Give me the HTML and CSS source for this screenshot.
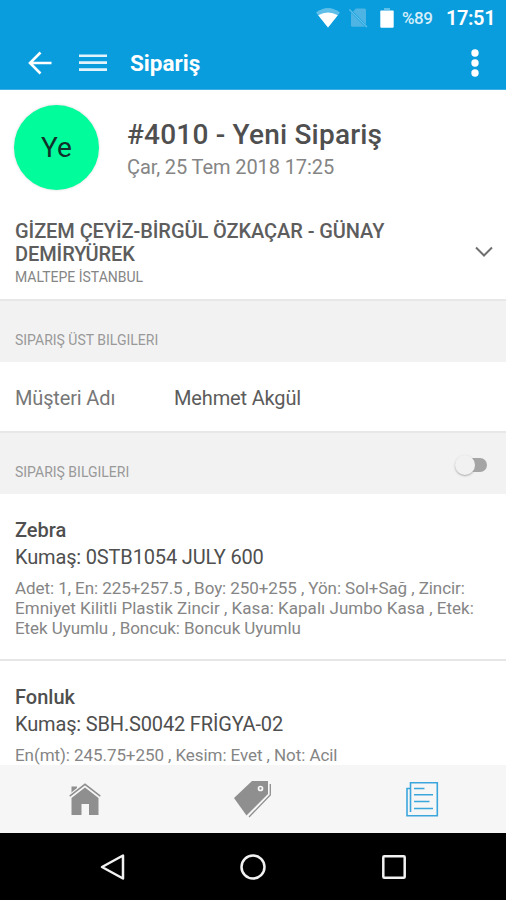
FILE: index.html
```html
<!DOCTYPE html>
<html lang="tr">
<head>
<meta charset="utf-8">
<title>Sipariş</title>
<link rel="stylesheet" href="styles.css">
</head>
<body>
<div class="screen">
  <header class="top">
    <div class="status">
      <svg class="wifi" width="24" height="20" viewBox="0 0 24 20"><path d="M0 4.500Q12-4.500 24 4.500L12 19.500Z" fill="#5fbfe9"/><path d="M2.200 7.200Q12 2 21.800 7.200L12 19.500Z" fill="#fff"/></svg>
      <svg class="sim" width="20" height="20" viewBox="0 0 20 20"><path d="M7 .5h8.500q1.500 0 1.500 1.500v14.500L4 3.500z" fill="#4db4e3"/><path d="M2 4.500L16 18.700H3.500q-1.500 0-1.500-1.500z" fill="#4db4e3"/><path d="M.3 1.500l17.700 17.500" stroke="#5fbfe9" stroke-width="1.300"/></svg>
      <svg class="battery" width="14" height="20" viewBox="0 0 14 20"><path d="M4 0h6v2h3.500v3H.5V2H4z" fill="#5fbfe9"/><rect x=".3" y="2.700" width="13.400" height="17" rx="1" fill="#fff"/></svg>
      <span class="percent">%89</span>
      <span class="clock">17:51</span>
    </div>
    <div class="appbar">
      <svg class="back" width="24" height="24" viewBox="0 0 24 24" fill="none" stroke="#fff" stroke-width="2.600"><path d="M12.500 1.500L2 12l10.500 10.500M2 12h21.500"/></svg>
      <svg class="menu" width="28" height="18" viewBox="0 0 28 18" fill="#e2f3fc"><path d="M0 .5h28v2.600H0zM0 7.300h28v2.600H0zM0 14.300h28v2.600H0z"/></svg>
      <h1 class="title">Sipariş</h1>
      <svg class="more" width="8" height="28" viewBox="0 0 8 28" fill="#fff"><circle cx="4" cy="4" r="3.700"/><circle cx="4" cy="14" r="3.700"/><circle cx="4" cy="24" r="3.700"/></svg>
    </div>
  </header>
  <main class="content">
    <section class="order">
      <div class="avatar">Ye</div>
      <div class="order-text">
        <h2 class="order-title">#4010 - Yeni Sipariş</h2>
        <p class="order-date">Çar, 25 Tem 2018 17:25</p>
      </div>
    </section>
    <section class="customer">
      <div class="customer-text">
        <h3 class="customer-name">GİZEM ÇEYİZ-BİRGÜL ÖZKAÇAR - GÜNAY<br>DEMİRYÜREK</h3>
        <p class="customer-city">MALTEPE İSTANBUL</p>
      </div>
      <svg class="chevron" width="18" height="12" viewBox="0 0 18 12" fill="none" stroke="#6f6f6f" stroke-width="2"><path d="M1 1.500l8 8 8-8"/></svg>
    </section>
    <div class="section-head">SIPARIŞ ÜST BILGILERI</div>
    <div class="field"><span class="field-label">Müşteri Adı</span><span class="field-value">Mehmet Akgül</span></div>
    <div class="section-head with-switch">SIPARIŞ BILGILERI<span class="switch"><i class="knob"></i></span></div>
    <article class="item">
      <h4 class="item-name">Zebra</h4>
      <p class="item-fabric">Kumaş: 0STB1054 JULY 600</p>
      <p class="item-detail">Adet: 1, En: 225+257.5 , Boy: 250+255 , Yön: Sol+Sağ , Zincir:<br><span class="wide">Emniyet Kilitli Plastik Zincir , Kasa: Kapalı Jumbo Kasa , Etek:</span><br>Etek Uyumlu , Boncuk: Boncuk Uyumlu</p>
    </article>
    <article class="item">
      <h4 class="item-name">Fonluk</h4>
      <p class="item-fabric">Kumaş: SBH.S0042 FRİGYA-02</p>
      <p class="item-detail">En(mt): 245.75+250 , Kesim: Evet , Not: Acil</p>
    </article>
  </main>
  <nav class="tabs">
    <svg class="tab home" width="32" height="34" viewBox="0 0 32 34"><path d="M2.500 3.500H8v4.500l-5.500 4.500z" fill="#8f8f8f"/><path d="M.7 13.500L16 1l15.300 12.500" fill="none" stroke="#f6f6f6" stroke-width="4"/><path d="M.7 13.200L16 1.300l15.300 11.900" fill="none" stroke="#8f8f8f" stroke-width="1.500"/><path d="M2.500 15L16 4.500 29.500 15v17H20V21h-7.500v11h-10z" fill="#8f8f8f"/></svg>
    <svg class="tab" width="38" height="38" viewBox="0 0 38 38"><path d="M1 18L19 1h16v13L13.500 35.500z" fill="#8f8f8f"/><path d="M16 37L37.300 15V4" fill="none" stroke="#8f8f8f" stroke-width="1.300"/><circle cx="27.500" cy="8.500" r="2" fill="none" stroke="#f6f6f6" stroke-width="1.700"/></svg>
    <svg class="tab" width="34" height="36" viewBox="0 0 34 36" fill="none" stroke="#3ba6dc"><path d="M5.500 31V1.700h26.800v33H2V7.500h3.500" stroke-width="1.600"/><path d="M9 7.500h10.500M9 13.700h19M9 20.500h15.500M9 27.500h19" stroke-width="1.500"/></svg>
  </nav>
  <footer class="sysnav">
    <svg class="sys-back" width="26" height="28" viewBox="0 0 26 28"><path d="M2 14L23 2.500v23z"/></svg>
    <svg width="28" height="28" viewBox="0 0 28 28"><circle cx="14" cy="14" r="11.500"/></svg>
    <svg width="26" height="28" viewBox="0 0 26 28"><rect x="2.300" y="3.300" width="21.400" height="21.400" rx="1"/></svg>
  </footer>
</div>
</body>
</html>
```
FILE: styles.css
```css
* { box-sizing: border-box; margin: 0; padding: 0; }
body { width: 506px; height: 900px; overflow: hidden; background: #fff; font-family: Roboto, "Liberation Sans", sans-serif; color: #4f4f4f; white-space: nowrap; }
.screen { height: 900px; display: flex; flex-direction: column; }
svg { display: block; flex: none; }
.top { height: 90px; flex: none; background: #0a9ddd; color: #fff; border-bottom: 1px solid #3fb2e5; }
.status { height: 36px; display: flex; align-items: center; padding-left: 316px; }
.sim { margin-left: 9px; }
.battery { margin-left: 11px; }
.percent { margin-left: 8px; width: 44px; font-size: 17px; font-weight: 500; letter-spacing: -.5px; color: #d5eefa; }
.clock { font-size: 20px; font-weight: 600; letter-spacing: -.4px; }
.appbar { height: 53px; display: flex; align-items: center; padding: 0 27px 0 28px; }
.menu { margin-left: 27px; }
.title { margin-left: 23px; padding-top: 1px; font-size: 22.5px; line-height: 28px; font-weight: 700; }
.more { margin-left: auto; }
.content { height: 675px; flex: none; overflow: hidden; }
.order { height: 125px; display: flex; padding: 15px 14px 0; }
.avatar { width: 85px; height: 85px; border-radius: 50%; background: #00fc9b; color: #12302a; font-size: 28px; display: flex; align-items: center; justify-content: center; box-shadow: 0 0 3px #d8d8d8; }
.order-text { margin-left: 28px; padding-top: 12px; }
.order-title { font-size: 28px; line-height: 36px; font-weight: 500; letter-spacing: .2px; }
.order-date { font-size: 20px; line-height: 28px; letter-spacing: -.1px; color: #858585; }
.customer { height: 84px; display: flex; justify-content: space-between; padding: 5px 13px 0 15px; }
.customer-name { font-size: 20px; line-height: 23px; font-weight: 500; letter-spacing: -.08px; color: #5d5d5d; }
.customer-city { font-size: 14px; line-height: 23px; color: #858585; }
.chevron { margin-top: 26px; }
.section-head { height: 63px; background: #f2f2f2; border-top: 2px solid #e8e8e8; display: flex; justify-content: space-between; padding: 28px 19px 0 15px; font-size: 14px; line-height: 22px; color: #999; }
.field { height: 69px; display: flex; padding: 0 15px; font-size: 20px; line-height: 72px; letter-spacing: -.15px; color: #777; }
.field-label { width: 159px; }
.field-value { color: #5c5c5c; }
.switch { width: 30px; height: 14px; margin-top: -3px; border-radius: 7px; background: #a5a5a5; position: relative; }
.knob { position: absolute; left: -2px; top: -3px; width: 20px; height: 20px; border-radius: 50%; background: #f1f1f1; box-shadow: 0 1px 2px #aaa; }
.item { height: 167px; border-bottom: 2px solid #e6e6e6; padding: 23px 15px 0; }
.item-name { font-size: 20px; line-height: 27px; font-weight: 500; }
.item-fabric { font-size: 20px; line-height: 27px; letter-spacing: -.16px; color: #4f4f4f; }
.item-detail { margin-top: 7px; font-size: 17px; line-height: 20px; letter-spacing: -.07px; color: #858585; }
.wide { letter-spacing: .03px; }
.tabs { height: 68px; flex: none; background: #f6f6f6; display: flex; align-items: center; justify-content: space-around; }
.home { margin: 2px -2px 0 2px; }
.sysnav { height: 67px; flex: none; background: #000; display: flex; align-items: center; justify-content: center; gap: 114px; }
.sys-back { margin: 0 -1px 0 1px; }
.sysnav svg { fill: none; stroke: #f2f2f2; stroke-width: 2.500; stroke-linejoin: round; }
```
